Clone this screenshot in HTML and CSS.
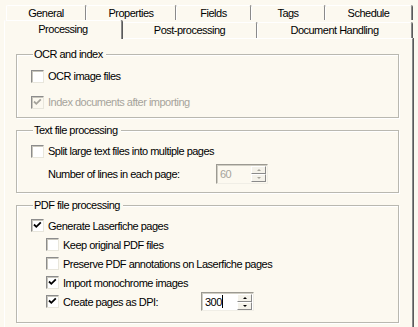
FILE: index.html
```html
<!DOCTYPE html>
<html lang="en">
<head>
    <meta charset="UTF-8">
    <title>Processing</title>
    <link rel="stylesheet" href="styles.css">
</head>
<body>
    <div class="dialog">
        <div class="tab-row tab-row-back">
            <div class="tab tab-general">General</div>
            <div class="tab tab-properties">Properties</div>
            <div class="tab tab-fields">Fields</div>
            <div class="tab tab-tags">Tags</div>
            <div class="tab tab-schedule">Schedule</div>
        </div>
        <div class="tab-row tab-row-front">
            <div class="tab tab-processing active">Processing</div>
            <div class="tab tab-post">Post-processing</div>
            <div class="tab tab-document">Document Handling</div>
        </div>

        <div class="panel">
            <fieldset class="group group-ocr">
                <legend>OCR and index</legend>
                <label class="check">
                    <span class="box"></span>
                    <span class="text">OCR image files</span>
                </label>
                <label class="check disabled">
                    <span class="box"><svg viewBox="0 0 11 11"><polyline points="2,4.5 4.3,6.8 8.8,2.3"/></svg></span>
                    <span class="text">Index documents after importing</span>
                </label>
            </fieldset>

            <fieldset class="group group-text">
                <legend>Text file processing</legend>
                <label class="check">
                    <span class="box"></span>
                    <span class="text">Split large text files into multiple pages</span>
                </label>
                <div class="field-row">
                    <span class="field-label lines-label">Number of lines in each page:</span>
                    <div class="spin spin-disabled spin-lines">
                        <span class="spin-value">60</span>
                        <span class="spin-buttons">
                            <span class="spin-btn"><span class="arrow-up"></span></span>
                            <span class="spin-btn"><span class="arrow-down"></span></span>
                        </span>
                    </div>
                </div>
            </fieldset>

            <fieldset class="group group-pdf">
                <legend>PDF file processing</legend>
                <label class="check">
                    <span class="box"><svg viewBox="0 0 11 11"><polyline points="2,4.5 4.3,6.8 8.8,2.3"/></svg></span>
                    <span class="text">Generate Laserfiche pages</span>
                </label>
                <label class="check sub">
                    <span class="box"></span>
                    <span class="text">Keep original PDF files</span>
                </label>
                <label class="check sub">
                    <span class="box"></span>
                    <span class="text">Preserve PDF annotations on Laserfiche pages</span>
                </label>
                <label class="check sub">
                    <span class="box"><svg viewBox="0 0 11 11"><polyline points="2,4.5 4.3,6.8 8.8,2.3"/></svg></span>
                    <span class="text">Import monochrome images</span>
                </label>
                <div class="check sub">
                    <span class="box"><svg viewBox="0 0 11 11"><polyline points="2,4.5 4.3,6.8 8.8,2.3"/></svg></span>
                    <span class="text dpi-label">Create pages as DPI:</span>
                    <div class="spin spin-dpi">
                        <span class="spin-value">300<span class="caret"></span></span>
                        <span class="spin-buttons">
                            <span class="spin-btn"><span class="arrow-up"></span></span>
                            <span class="spin-btn"><span class="arrow-down"></span></span>
                        </span>
                    </div>
                </div>
            </fieldset>
        </div>
    </div>
</body>
</html>
```

FILE: styles.css
```css
body {
    margin: 0;
    background-color: #fcf9f0;
    font-family: "Liberation Sans", Arial, sans-serif;
    font-size: 11px;
    letter-spacing: -0.5px;
    color: #000;
    overflow: hidden;
}
.dialog {
    width: 418px;
    height: 327px;
}

/* tabs */
.tab-row {
    display: flex;
}
.tab-row-back {
    margin-top: 5px;
    padding-left: 6px;
    height: 15px;
}
.tab-row-front {
    padding-left: 4px;
    height: 18px;
}
.tab {
    box-sizing: border-box;
    height: 15px;
    line-height: 14px;
    text-align: center;
    border-top: 1px solid #fff;
    border-left: 1px solid #fff;
    border-right: 1px solid #8a8a8a;
    box-shadow: 1px 0 0 #5a5a5a;
    border-radius: 2px 2px 0 0;
    white-space: nowrap;
}
.tab-row-front .tab {
    margin-top: 2px;
    height: 16px;
    line-height: 15px;
}
.tab-row-front .tab.active {
    margin-top: 0;
    height: 19px;
    line-height: 16px;
    position: relative;
    z-index: 1;
    background-color: #fcf9f0;
}
.tab-general { width: 80px; }
.tab-properties { width: 90px; }
.tab-fields { width: 75px; }
.tab-tags { width: 74px; }
.tab-schedule { width: 87px; }
.tab-processing { width: 118px; }
.tab-post { width: 135px; }
.tab-document { width: 155px; }

/* panel */
.panel {
    box-sizing: border-box;
    margin-left: 4px;
    width: 409px;
    height: 300px;
    padding-top: 9px;
    border-top: 1px solid #fff;
    border-left: 1px solid #fff;
    border-right: 1px solid #8a8a8a;
    box-shadow: 1px 0 0 #5a5a5a;
}

.group {
    margin: 0 13px 0 11px;
    padding: 0;
    min-inline-size: 0;
    border: 1px solid #b9b8b0;
    box-shadow: inset 1px 1px 0 #fff, 1px 1px 0 #fff;
}
.group legend {
    margin-left: 2px;
    padding: 0 3px 0 1px;
    line-height: 13px;
    background-color: #fcf9f0;
}
.group-ocr { padding: 5px 0 5px 14px; }
.group-text { margin-top: 6px; padding: 4px 0 8px 14px; }
.group-pdf { margin-top: 6px; padding: 4px 0 11px 14px; }

/* checkboxes */
.check {
    display: flex;
    align-items: center;
    height: 20px;
}
.group-ocr .check + .check {
    margin-top: 6px;
}
.group-pdf .check {
    height: 19px;
}
.check.sub {
    padding-left: 15px;
}
.box {
    box-sizing: border-box;
    width: 13px;
    height: 13px;
    flex-shrink: 0;
    margin-right: 4px;
    background-color: #fff;
    border: 1px solid;
    border-color: #8c8c8c #e8e6dc #e8e6dc #8c8c8c;
    box-shadow: inset 1px 1px 0 #c8c6bc;
}
.box svg {
    display: block;
    width: 11px;
    height: 11px;
}
.box polyline {
    fill: none;
    stroke: #000;
    stroke-width: 1.8;
}
.check.disabled .text {
    color: #a6a49c;
}
.check.disabled .box {
    background-color: #fcf9f0;
}
.check.disabled polyline {
    stroke: #a6a49c;
}

/* spin fields */
.field-row {
    display: flex;
    align-items: center;
    margin-top: 3px;
    padding-left: 17px;
}
.lines-label {
    width: 168px;
}
.dpi-label {
    width: 138px;
}
.spin {
    box-sizing: border-box;
    display: flex;
    align-items: center;
    height: 20px;
    border: 1px solid;
    border-color: #9c9a92 #f0eee6 #f0eee6 #9c9a92;
    box-shadow: inset 1px 1px 0 #d0cec4;
    background-color: #fff;
}
.spin-lines {
    width: 52px;
}
.spin-dpi {
    width: 53px;
    height: 19px;
}
.spin-disabled {
    background-color: #fcf9f0;
    color: #a6a49c;
}
.spin-value {
    flex: 1;
    padding-left: 3px;
    display: flex;
    align-items: center;
}
.caret {
    display: inline-block;
    width: 1px;
    height: 13px;
    background-color: #000;
}
.spin-buttons {
    display: flex;
    flex-direction: column;
    width: 15px;
    height: 16px;
    margin-right: 1px;
}
.spin-btn {
    flex: 1;
    display: flex;
    align-items: center;
    justify-content: center;
    box-sizing: border-box;
    border: 1px solid;
    border-color: #fff #8a8a8a #8a8a8a #fff;
    background-color: #f4f2ea;
}
.arrow-up, .arrow-down {
    width: 0;
    height: 0;
    border-left: 2px solid transparent;
    border-right: 2px solid transparent;
}
.arrow-up { border-bottom: 2px solid #000; }
.arrow-down { border-top: 2px solid #000; }
.spin-disabled .arrow-up { border-bottom-color: #a6a49c; }
.spin-disabled .arrow-down { border-top-color: #a6a49c; }
```
